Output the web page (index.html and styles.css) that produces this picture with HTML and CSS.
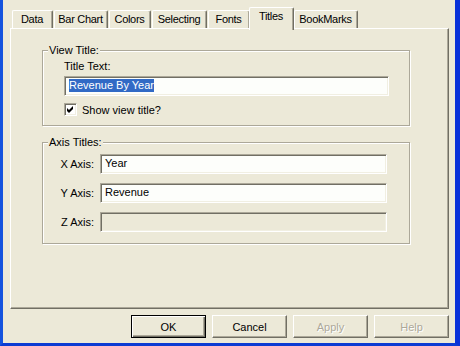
FILE: index.html
```html
<!DOCTYPE html>
<html lang="en">
<head>
    <meta charset="UTF-8">
    <title>Chart Properties - Titles</title>
    <link rel="stylesheet" href="styles.css">
</head>
<body>
<div class="window">
    <div class="tabs">
        <div class="tab tab-data">Data</div>
        <div class="tab tab-bar">Bar Chart</div>
        <div class="tab tab-colors">Colors</div>
        <div class="tab tab-selecting">Selecting</div>
        <div class="tab tab-fonts">Fonts</div>
        <div class="tab tab-titles active">Titles</div>
        <div class="tab tab-bookmarks">BookMarks</div>
    </div>
    <div class="panel">
        <div class="group view-group">
            <span class="group-title">View Title:</span>
            <div class="field-label">Title Text:</div>
            <div class="field title-field"><span class="selected">Revenue By Year</span></div>
            <div class="check-row">
                <span class="checkbox">
                    <svg width="7" height="7" viewBox="0 0 7 7"><path d="M0 2 L2 4 L6 0 V3 L2 7 L0 5 Z" fill="#000"/></svg>
                </span>
                <span>Show view title?</span>
            </div>
        </div>
        <div class="group axis-group">
            <span class="group-title">Axis Titles:</span>
            <label class="axis-label">X Axis:</label>
            <div class="field">Year</div>
            <label class="axis-label">Y Axis:</label>
            <div class="field">Revenue</div>
            <label class="axis-label">Z Axis:</label>
            <div class="field disabled"></div>
        </div>
    </div>
    <div class="buttons">
        <button class="btn default">OK</button>
        <button class="btn">Cancel</button>
        <button class="btn" disabled>Apply</button>
        <button class="btn" disabled>Help</button>
    </div>
</div>
</body>
</html>
```

FILE: styles.css
```css
/* Dialog window */
body {
    margin: 0;
    font-family: 'Liberation Sans', Arial, sans-serif;
    font-size: 11px;
    color: #000;
    background: #ECE9D8;
}

.window {
    width: 460px;
    height: 346px;
    box-sizing: border-box;
    background: #ECE9D8;
    border-left: 3px solid #1553DE;
    border-right: 5px solid #0831D9;
    border-bottom: 3px solid #0B3BD3;
}

/* Tabs */
.tabs {
    display: flex;
    align-items: flex-end;
    padding: 7px 0 0 9px;
    height: 21px;
    position: relative;
    z-index: 2;
}

.tab {
    height: 18px;
    box-sizing: border-box;
    padding: 0 1px 0 0;
    margin-right: 1px;
    line-height: 17px;
    letter-spacing: -0.3px;
    text-align: center;
    border-top: 1px solid #fff;
    border-left: 1px solid #fff;
    border-right: 1px solid #716F64;
    box-shadow: inset -1px 0 0 #ACA899;
    border-radius: 2px 2px 0 0;
    background: #ECE9D8;
    white-space: nowrap;
}

.tab-data { width: 41px; }
.tab-bar { width: 54px; }
.tab-colors { width: 42px; }
.tab-selecting { width: 55px; }
.tab-fonts { width: 42px; }
.tab-titles { width: 45px; }
.tab-bookmarks { width: 64px; }

.tab.active {
    height: 23px;
    margin: 0 0 -2px -2px;
    line-height: 16px;
    position: relative;
}

/* Tab page */
.panel {
    margin: 0 6px 0 7px;
    height: 281px;
    box-sizing: border-box;
    border-top: 1px solid #fff;
    border-left: 1px solid #fff;
    border-right: 1px solid #716F64;
    border-bottom: 1px solid #716F64;
    box-shadow: inset -1px -1px 0 #ACA899;
    padding: 21px 0 0 31px;
}

.group {
    position: relative;
    width: 368px;
    box-sizing: border-box;
    border: 1px solid #ACA899;
    box-shadow: inset 1px 1px 0 #fff, 1px 1px 0 #fff;
}

.group-title {
    position: absolute;
    top: -7px;
    left: 5px;
    padding: 0 1px;
    line-height: 13px;
    background: #ECE9D8;
}

.view-group {
    padding: 9px 0 9px 21px;
}

.field-label {
    line-height: 13px;
    margin-bottom: 3px;
}

.field {
    height: 20px;
    box-sizing: border-box;
    padding-left: 4px;
    line-height: 16px;
    background: #FDFEFB;
    border: 1px solid;
    border-color: #ACA899 #fff #fff #ACA899;
    box-shadow: inset 1px 1px 0 #716F64, inset -1px -1px 0 #F1EFE2;
    white-space: nowrap;
}

.field.disabled {
    background: #ECE9D8;
}

.title-field {
    width: 325px;
}

.selected {
    background: #316AC5;
    color: #fff;
    display: inline-block;
    line-height: 13px;
}

.check-row {
    display: flex;
    align-items: center;
    gap: 5px;
    margin-top: 7px;
    height: 13px;
}

.checkbox {
    width: 13px;
    height: 13px;
    box-sizing: border-box;
    display: flex;
    align-items: center;
    justify-content: center;
    background: #fff;
    border: 1px solid;
    border-color: #ACA899 #fff #fff #ACA899;
    box-shadow: inset 1px 1px 0 #716F64, inset -1px -1px 0 #F1EFE2;
}

.axis-group {
    margin-top: 16px;
    padding: 11px 0 11px 0;
    display: grid;
    grid-template-columns: 51px 287px;
    column-gap: 6px;
    row-gap: 9px;
    align-items: center;
}

.axis-label {
    text-align: right;
}

/* Bottom buttons */
.buttons {
    display: flex;
    justify-content: flex-end;
    gap: 6px;
    margin: 6px 6px 0 0;
}

.btn {
    width: 75px;
    height: 23px;
    padding: 0;
    font-family: inherit;
    font-size: 11px;
    color: #000;
    background: #ECE9D8;
    border: 1px solid;
    border-color: #fff #716F64 #716F64 #fff;
    box-shadow: inset -1px -1px 0 #ACA899;
    border-radius: 0;
}

.btn.default {
    border: 1px solid #000;
    box-shadow: inset 1px 1px 0 #fff, inset -1px -1px 0 #716F64, inset -2px -2px 0 #ACA899;
}

.btn:disabled {
    color: #ACA899;
    text-shadow: 1px 1px 0 #fff;
}
```
